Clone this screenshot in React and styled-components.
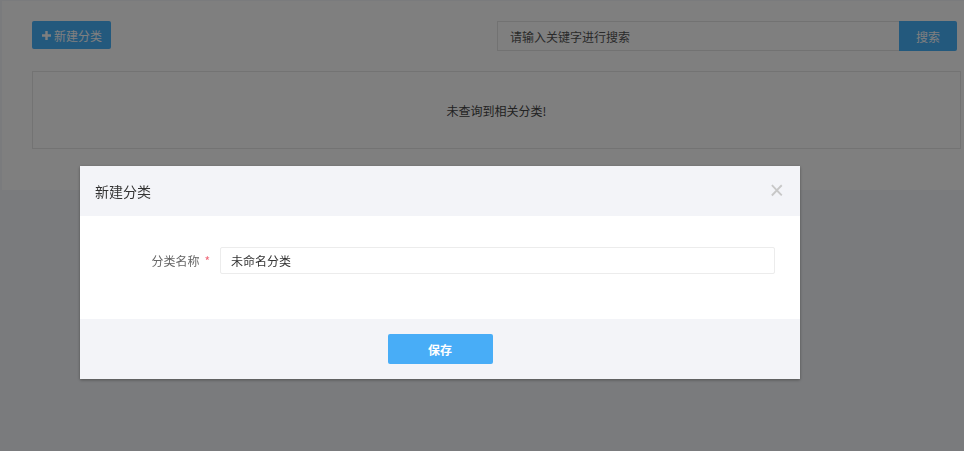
import React from "react";
import styled, { createGlobalStyle } from "styled-components";

const GlobalStyle = createGlobalStyle`
  html, body {
    margin: 0;
    padding: 0;
    background: #f5f7fa;
    font-family: "Microsoft YaHei", "Noto Sans CJK SC", "Liberation Sans", sans-serif;
    font-size: 12px;
    color: #333;
  }
  * { box-sizing: border-box; }
`;

const PlusIcon = () => (
  <svg width="9" height="9" viewBox="0 0 9 9">
    <path d="M3.3 0h2.4v3.3H9v2.4H5.7V9H3.3V5.7H0V3.3h3.3z" fill="currentColor" />
  </svg>
);

const App = () => {
  return (
    <Page>
      <GlobalStyle />
      <Panel>
        <Toolbar>
          <AddButton>
            <PlusIcon />
            新建分类
          </AddButton>
          <SearchGroup>
            <SearchInput placeholder="请输入关键字进行搜索" />
            <SearchButton>搜索</SearchButton>
          </SearchGroup>
        </Toolbar>
        <EmptyBox>未查询到相关分类!</EmptyBox>
      </Panel>

      <Overlay>
        <Modal>
          <ModalHeader>
            <ModalTitle>新建分类</ModalTitle>
            <CloseButton>×</CloseButton>
          </ModalHeader>
          <ModalBody>
            <FormRow>
              <Label>
                分类名称<Required>*</Required>
              </Label>
              <TextInput defaultValue="未命名分类" />
            </FormRow>
          </ModalBody>
          <ModalFooter>
            <SaveButton>保存</SaveButton>
          </ModalFooter>
        </Modal>
      </Overlay>
    </Page>
  );
};

export default App;

const Page = styled.div`
  min-height: 100vh;
  background: #f5f7fa;
  padding-top: 1px;
`;

const Panel = styled.div`
  margin-left: 2px;
  height: 189px;
  background: #fff;
  padding: 20px 3px 0 30px;
`;

const Toolbar = styled.div`
  display: flex;
  justify-content: space-between;
  align-items: flex-start;
  padding-right: 4px;
`;

const AddButton = styled.button`
  display: flex;
  align-items: center;
  gap: 3px;
  height: 28px;
  padding: 0 9px 0 10px;
  background: #47b2fb;
  color: #fff;
  border: none;
  border-radius: 2px;
  font-family: inherit;
  font-size: 12px;
  cursor: pointer;
`;

const SearchGroup = styled.div`
  display: flex;
`;

const SearchInput = styled.input`
  width: 402px;
  height: 30px;
  border: 1px solid #e4e4e4;
  border-right: none;
  padding: 0 12px;
  font-family: inherit;
  font-size: 12px;
  color: #333;
  outline: none;

  &::placeholder {
    color: #555;
  }
`;

const SearchButton = styled.button`
  width: 58px;
  height: 30px;
  background: #47b2fb;
  color: #fff;
  border: none;
  border-radius: 0 2px 2px 0;
  font-family: inherit;
  font-size: 12px;
`;

const EmptyBox = styled.div`
  margin-top: 20px;
  height: 78px;
  border: 1px solid #e6e6e6;
  display: flex;
  align-items: center;
  justify-content: center;
  color: #444;
  font-size: 12px;
`;

const Overlay = styled.div`
  position: fixed;
  inset: 0;
  background: rgba(0, 0, 0, 0.5);
  padding: 166px 0 0 80px;
`;

const Modal = styled.div`
  width: 720px;
  background: #fff;
  box-shadow: 0 1px 3px rgba(0, 0, 0, 0.35);
`;

const ModalHeader = styled.div`
  height: 50px;
  background: #f3f4f8;
  display: flex;
  align-items: center;
  justify-content: space-between;
  padding: 0 16px 0 15px;
`;

const ModalTitle = styled.div`
  font-size: 14px;
  color: #333;
`;

const CloseButton = styled.span`
  font-family: "Liberation Sans", sans-serif;
  font-size: 25px;
  color: #c8c8c8;
  line-height: 1;
  margin-top: -1px;
`;

const ModalBody = styled.div`
  height: 103px;
  padding: 31px 25px 0 0;
`;

const FormRow = styled.div`
  display: flex;
  align-items: center;
`;

const Label = styled.label`
  width: 140px;
  padding-right: 10px;
  text-align: right;
  color: #666;
  font-size: 12px;
`;

const Required = styled.span`
  color: #f06a7a;
  margin-left: 5px;
  font-size: 12px;
`;

const TextInput = styled.input`
  flex: 1;
  height: 27px;
  border: 1px solid #ececec;
  border-radius: 2px;
  padding: 0 10px;
  font-family: inherit;
  font-size: 12px;
  color: #333;
  outline: none;
`;

const ModalFooter = styled.div`
  height: 60px;
  background: #f3f4f8;
  display: flex;
  justify-content: center;
  padding-top: 15px;
`;

const SaveButton = styled.button`
  width: 105px;
  height: 30px;
  background: #48adf7;
  color: #fff;
  border: none;
  border-radius: 2px;
  font-family: inherit;
  font-size: 12px;
  font-weight: bold;
`;
